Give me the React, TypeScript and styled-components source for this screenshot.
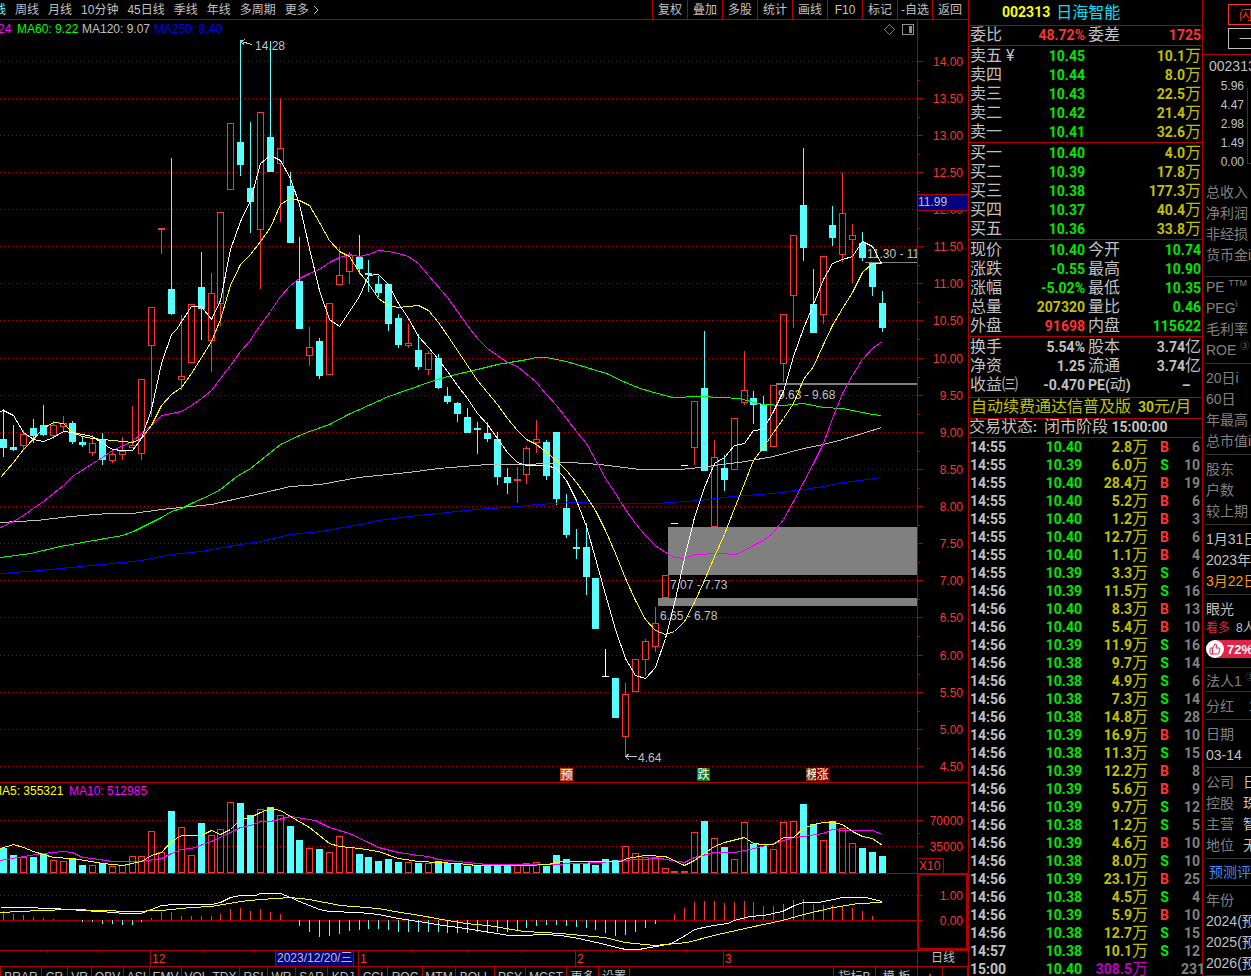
import React from 'react';
import styled, { createGlobalStyle, css } from 'styled-components';
import { ThumbsUp } from 'lucide-react';

const c = {
  line: '#b00000',
  red: '#ff3232',
  cyan: '#54ffff',
  text: '#c0c0c0',
  gray: '#808080',
  green: '#00e600',
  lime: '#00ff00',
  yellow: '#ffff00',
  olive: '#c0c000',
  magenta: '#ff00ff',
  blue: '#0000ff',
  navy: '#000080',
  name: '#00e0ff',
};

const sans = `"Liberation Sans", "Noto Sans CJK SC", sans-serif`;
const quoteFont = `Roboto, "Noto Sans CJK SC", sans-serif`;

const GlobalStyle = createGlobalStyle`
  *, *::before, *::after { box-sizing: border-box; }
  body { margin: 0; background: #000; color: ${c.text}; font: 12px/16px ${sans}; overflow: hidden; }
  button { margin: 0; padding: 0; border: 0; background: none; color: inherit; font: inherit; cursor: pointer; white-space: nowrap; }
  table { border-collapse: collapse; border-spacing: 0; }
`;

/* ---------- data ---------- */

type Kind = 'up' | 'down' | 'flatUp' | 'flatDown';
// x, high, body top, body bottom, low, kind, volume top, MACD bar end
type Bar = [number, number, number, number, number, Kind, number, number];

const U: Kind = 'up';
const D: Kind = 'down';

const bars: Bar[] = [
  [3, 409, 439, 448, 457, D, 848, 911], [13, 425, 447, 450, 451, D, 855, 914], [23, 430, 434, 446, 450, U, 857, 915],
  [33, 419, 428, 436, 443, D, 857, 917], [43, 405, 425, 435, 436, D, 854, 918], [53, 421, 425, 436, 439, U, 860, 919],
  [63, 416, 423, 427, 432, U, 861, 920], [72, 421, 423, 442, 444, D, 859, 920], [82, 436, 442, 445, 447, D, 865, 922],
  [92, 435, 443, 453, 456, U, 865, 922], [102, 433, 439, 460, 465, D, 863, 924], [112, 452, 454, 461, 463, U, 866, 924],
  [122, 437, 451, 455, 460, U, 865, 925], [132, 406, 445, 448, 448, U, 856, 925], [141, 379, 379, 454, 460, U, 856, 922],
  [151, 307, 307, 346, 417, U, 831, 918], [161, 228, 228, 230, 254, U, 852, 912], [171, 158, 289, 314, 315, D, 811, 912],
  [181, 315, 376, 380, 390, U, 827, 916], [191, 304, 304, 363, 363, U, 855, 916], [201, 252, 287, 309, 340, D, 823, 916],
  [211, 273, 293, 341, 372, U, 835, 916], [220, 212, 212, 304, 326, U, 829, 914], [230, 123, 123, 190, 190, U, 802, 909],
  [240, 40, 142, 165, 176, D, 803, 908], [250, 122, 188, 202, 233, D, 815, 911], [260, 112, 112, 230, 289, U, 809, 909],
  [270, 41, 137, 172, 172, D, 807, 912], [280, 99, 148, 164, 222, U, 815, 914], [290, 172, 186, 243, 243, D, 826, 920],
  [299, 237, 281, 329, 329, D, 840, 926], [309, 327, 347, 356, 366, U, 848, 932], [319, 338, 341, 376, 379, D, 849, 937],
  [329, 303, 303, 375, 375, U, 852, 936], [339, 247, 275, 285, 285, U, 836, 934], [349, 252, 255, 272, 284, U, 847, 931],
  [359, 235, 257, 269, 274, D, 854, 930], [368, 260, 273, 275, 292, D, 857, 929], [378, 276, 284, 293, 297, D, 861, 929],
  [388, 284, 284, 324, 331, D, 859, 930], [398, 314, 318, 345, 348, D, 862, 932], [408, 324, 343, 346, 348, U, 862, 932],
  [418, 334, 350, 367, 370, D, 863, 932], [428, 351, 353, 370, 375, U, 863, 932], [438, 354, 358, 388, 389, D, 861, 932],
  [447, 387, 396, 402, 404, D, 863, 933], [457, 402, 403, 414, 422, D, 864, 933], [467, 408, 417, 433, 433, D, 866, 933],
  [477, 422, 428, 430, 454, D, 865, 932], [487, 422, 433, 439, 442, D, 865, 932], [497, 432, 439, 477, 485, D, 866, 932],
  [507, 468, 477, 483, 494, D, 866, 932], [517, 467, 479, 481, 503, U, 865, 930], [526, 446, 448, 475, 484, U, 863, 928],
  [536, 420, 439, 443, 453, U, 862, 926], [546, 440, 442, 476, 480, D, 866, 925], [556, 432, 432, 499, 505, D, 855, 925],
  [566, 494, 508, 535, 538, D, 859, 926], [576, 529, 547, 549, 559, D, 864, 927], [586, 523, 547, 577, 595, D, 863, 928],
  [595, 578, 578, 629, 629, D, 865, 930], [605, 649, 676, 677, 677, 'flatDown', 859, 933], [615, 678, 678, 718, 718, D, 860, 936],
  [625, 683, 694, 737, 757, U, 846, 935], [635, 659, 659, 692, 692, U, 853, 932], [645, 639, 641, 660, 676, U, 857, 928],
  [655, 607, 623, 647, 652, U, 857, 924], [665, 575, 575, 598, 598, U, 868, 920], [674, 523, 523, 524, 524, 'flatUp', 871, 914],
  [684, 465, 465, 466, 466, 'flatUp', 871, 908], [694, 401, 401, 448, 465, U, 832, 902], [704, 331, 388, 471, 471, D, 821, 901],
  [714, 440, 457, 527, 527, U, 838, 901], [724, 455, 468, 480, 491, D, 847, 903], [734, 418, 418, 470, 470, U, 859, 902],
  [744, 351, 390, 403, 405, U, 822, 901], [753, 391, 398, 405, 424, D, 844, 902], [763, 396, 404, 451, 451, D, 846, 906],
  [773, 385, 385, 447, 447, U, 849, 906], [783, 314, 314, 364, 382, U, 822, 904], [793, 235, 235, 296, 328, U, 821, 900],
  [803, 148, 205, 248, 261, D, 804, 899], [813, 269, 304, 333, 333, D, 824, 904], [823, 256, 256, 315, 324, U, 840, 905],
  [832, 206, 225, 238, 246, D, 821, 905], [842, 173, 213, 255, 262, U, 828, 906], [852, 224, 235, 240, 283, U, 843, 908],
  [862, 232, 243, 258, 261, D, 848, 911], [872, 263, 263, 287, 296, D, 852, 916], [882, 291, 303, 328, 332, D, 856, 920],
];

const priceLines: [string, string][] = [
  [c.blue, '0,573 40,570 80,566 122,562 141,560 171,554 200,551 240,544 260,541 290,534 320,531 360,524 378,520 408,516 447,512 487,508 507,507 536,504 576,502 600,503 656,503 700,500 732,496 773,493 803,489 823,486 842,482 860,480 881,477'],
  [c.text, '0,522 36,520 70,516 108,513 132,513 161,509 211,504 260,493 290,486 320,484 358,477 408,472 438,468 487,464 526,464 545,463 570,462 600,464 615,466 640,469 680,469 700,467 714,465 745,461 773,456 803,448 823,444 842,439 862,433 881,427'],
  [c.lime, '0,557 30,553 60,546 82,542 122,535 133,531 161,517 171,511 181,508 191,503 211,494 220,489 235,477 250,468 260,460 280,444 299,435 309,431 329,424 348,414 368,405 388,396 408,389 428,382 447,376 477,369 497,364 527,359 536,357 546,357 566,361 586,367 606,373 625,382 640,388 650,391 672,397 700,396 720,397 740,398 753,402 763,404 783,405 803,403 813,405 823,407 842,408 862,412 872,414 881,415'],
  [c.magenta, '0,527 13,521 23,515 43,501 63,485 72,476 92,463 102,457 112,450 132,441 141,433 151,425 161,415 181,411 191,405 201,398 211,390 220,378 230,365 240,351 250,340 256,330 270,311 280,296 290,285 299,278 309,273 319,269 329,262 339,257 349,254 359,256 368,254 378,250 388,251 398,253 408,256 418,263 428,275 447,297 457,311 467,325 477,338 487,348 507,362 517,366 536,382 546,394 556,405 576,431 586,443 597,463 605,478 615,493 625,509 635,523 645,535 655,545 665,552 674,557 684,558 694,554 720,553 735,554 744,550 753,545 763,540 773,532 783,519 793,501 803,482 813,463 823,443 832,418 842,393 852,375 862,359 872,348 882,341'],
  [c.yellow, '0,477 13,462 23,449 43,428 53,422 63,423 72,432 82,436 92,438 112,440 122,441 132,442 141,438 151,425 161,405 171,394 181,387 191,373 201,357 211,341 220,319 230,285 240,264 250,254 260,241 270,227 280,204 290,198 299,200 309,205 319,222 329,240 339,251 349,256 359,272 368,283 378,298 388,305 398,307 418,305 428,310 438,322 447,335 457,350 467,365 477,380 487,392 497,404 507,418 517,430 526,439 536,444 546,452 556,460 566,470 576,482 586,496 595,510 605,530 615,553 625,578 635,600 645,619 655,630 665,634 674,631 684,621 694,602 704,580 714,556 724,534 734,508 744,483 753,460 763,447 773,432 783,418 793,403 803,379 813,366 823,344 832,325 842,308 852,292 862,272 872,263 881,263'],
  ['#ffffff', '0,411 3,410 13,415 23,432 33,439 43,441 53,437 63,431 72,432 82,434 92,436 102,443 112,449 122,450 132,450 141,438 151,409 161,363 171,334 176,329 191,306 201,306 211,319 220,300 230,249 240,221 250,200 260,163 270,155 280,160 290,178 299,204 309,248 319,290 329,319 339,326 359,296 368,275 378,274 388,284 398,303 408,318 418,336 428,347 438,359 447,371 457,385 467,398 477,413 487,424 497,438 507,452 517,462 526,465 546,465 556,468 566,480 576,500 586,526 595,558 605,594 615,629 625,658 635,675 645,678 655,667 665,638 674,603 684,558 694,517 704,487 714,463 724,457 734,445 744,443 753,430 763,429 773,411 783,391 793,356 803,328 813,304 823,279 832,263 842,259 852,256 862,241 872,246 881,263'],
];

const volumeLines: [string, string][] = [
  [c.magenta, '0,860 23,856 43,853 63,851 72,852 82,857 92,858 112,861 141,861 161,858 171,853 181,849 191,848 211,841 230,832 240,827 250,825 260,821 270,821 290,816 315,820 329,827 349,833 368,842 378,847 398,852 418,855 428,856 438,859 467,862 487,864 550,864 600,862 635,859 660,858 684,862 694,857 714,852 734,852 754,848 773,843 793,837 803,836 823,833 832,829 842,830 872,830 882,834'],
  [c.yellow, '0,848 13,844 23,847 33,851 43,854 53,857 72,858 102,863 122,865 141,861 151,855 161,852 171,841 181,835 201,835 211,830 220,834 230,829 240,819 250,817 260,812 270,808 280,810 290,816 309,827 329,843 339,846 359,848 378,851 398,858 418,861 438,862 457,863 477,865 526,865 548,864 560,861 620,861 627,858 645,855 665,856 684,865 694,860 704,853 714,846 724,842 744,837 753,843 763,844 773,844 783,837 793,837 803,828 813,824 823,822 832,822 842,824 852,831 862,836 872,838 882,845'],
];

const macdLines: [string, string][] = [
  ['#ffffff', '0,907 25,907 50,908 70,909 80,910 100,911 125,913 140,913 151,909 161,905 175,904 211,904 220,902 230,897 240,895 255,895 260,893 280,893 290,897 299,901 319,909 329,911 358,912 378,914 398,918 418,921 436,924 465,928 509,935 520,935 545,934 560,935 578,938 596,942 625,949 638,949 656,946 671,943 685,935 694,929 713,925 727,923 734,920 749,916 763,915 782,911 794,905 803,902 818,902 833,899 842,897 865,897 882,901'],
  [c.yellow, '0,912 40,910 70,909 100,910 130,911 161,910 191,907 211,906 240,901 260,899 290,897 309,899 340,905 378,908 400,912 420,915 436,918 465,923 487,925 524,931 560,933 604,937 625,942 654,945 687,942 713,935 749,927 782,920 803,914 833,907 858,903 882,902'],
];

const prices = Array.from({ length: 20 }, (_, i) => ({
  label: (14 - i * 0.5).toFixed(2),
  y: Math.floor(61 + i * 37.13),
})).filter((p) => p.y < 780);

const asks = [['卖五', '10.45', '10.1'], ['卖四', '10.44', '8.0'], ['卖三', '10.43', '22.5'], ['卖二', '10.42', '21.4'], ['卖一', '10.41', '32.6']];
const bids = [['买一', '10.40', '4.0'], ['买二', '10.39', '17.8'], ['买三', '10.38', '177.3'], ['买四', '10.37', '40.4'], ['买五', '10.36', '33.8']];

const ticks = [
  '14:55 10.40 2.8 B 6', '14:55 10.39 6.0 S 10', '14:55 10.40 28.4 B 19', '14:55 10.40 5.2 B 6', '14:55 10.40 1.2 B 3',
  '14:55 10.40 12.7 B 6', '14:55 10.40 1.1 B 4', '14:55 10.39 3.3 S 6', '14:56 10.39 11.5 S 16', '14:56 10.40 8.3 B 13',
  '14:56 10.40 5.4 B 10', '14:56 10.39 11.9 S 16', '14:56 10.38 9.7 S 14', '14:56 10.38 4.9 S 6', '14:56 10.38 7.3 S 14',
  '14:56 10.38 14.8 S 28', '14:56 10.39 16.9 B 10', '14:56 10.38 11.3 S 15', '14:56 10.39 12.2 B 8', '14:56 10.39 5.6 B 9',
  '14:56 10.39 9.7 S 12', '14:56 10.38 1.2 S 5', '14:56 10.39 4.6 B 10', '14:56 10.38 8.0 S 10', '14:56 10.39 23.1 B 25',
  '14:56 10.38 4.5 S 4', '14:56 10.39 5.9 B 10', '14:56 10.38 12.7 S 15', '14:57 10.38 10.1 S 12', '15:00 10.40 308.5 - 231',
].map((t) => t.split(' '));

const indicators: [string, number][] = [
  ['BRAR', 41], ['CR', 26], ['VR', 24], ['OBV', 32], ['ASI', 26], ['EMV', 32], ['VOL-TDX', 58], ['RSI', 28], ['WR', 28], ['SAR', 32],
  ['KDJ', 31], ['CCI', 29], ['ROC', 35], ['MTM', 33], ['BOLL', 39], ['PSY', 31], ['MCST', 41], ['更多', 32], ['设置', 32],
];

/* ---------- layout ---------- */

const Terminal = styled.div`
  display: flex;
  height: 100vh;
  overflow: hidden;
  background: #000;
`;

const ChartColumn = styled.main`
  flex: 1;
  min-width: 0;
  display: flex;
  flex-direction: column;
  overflow: hidden;
`;

const Toolbar = styled.nav`
  display: flex;
  justify-content: space-between;
  flex: none;
  height: 20px;
  border-bottom: 1px solid ${c.line};
`;

const PeriodList = styled.div`
  display: flex;
  align-items: center;
  gap: 9px;
  margin-left: -6px;
`;

const PeriodButton = styled.button<{ $active?: boolean }>`
  display: flex;
  align-items: center;
  gap: 4px;
  color: ${(p) => (p.$active ? c.cyan : c.text)};
`;

const ToolList = styled.div`
  display: flex;
  padding-right: 1px;
`;

const ToolButton = styled.button`
  width: 35px;
  border-left: 1px solid ${c.line};
  text-align: center;
`;

const Pane = styled.section`
  display: flex;
  flex: none;
  border-bottom: 1px solid ${c.line};
`;

const Plot = styled.svg<{ $h: number }>`
  display: block;
  flex: 1;
  min-width: 0;
  height: ${(p) => p.$h}px;
  overflow: hidden;
  font: 12px ${sans};
  shape-rendering: crispEdges;
`;

const Axis = styled.svg<{ $h: number }>`
  display: block;
  flex: none;
  width: 51px;
  height: ${(p) => p.$h}px;
  font: 12px ${sans};
  shape-rendering: crispEdges;
`;

const PeriodCell = styled.div`
  width: 51px;
  border-left: 1px solid ${c.line};
  line-height: 15px;
  text-align: center;
`;

const IndicatorBar = styled.nav`
  display: flex;
  flex: none;
  justify-content: space-between;
  height: 20px;
`;

const TabGroup = styled.div`
  display: flex;
`;

const Tab = styled.button<{ $w?: number }>`
  border-left: 1px solid ${c.line};
  text-align: center;
  ${(p) => p.$w && css`width: ${p.$w}px;`}
  &:last-child { border-right: 1px solid ${c.line}; }
`;

/* ---------- quote panel ---------- */

const QuotePanel = styled.aside`
  flex: none;
  width: 235px;
  border-left: 1px solid ${c.line};
  border-right: 1px solid ${c.line};
  font: bold 14px/19px ${quoteFont};
`;

const QuoteTitle = styled.h1`
  display: flex;
  align-items: center;
  gap: 6px;
  height: 26px;
  margin: 0;
  padding-left: 33px;
  border-bottom: 1px solid ${c.line};
  font: inherit;
  color: ${c.yellow};
`;

const Han = styled.span<{ $color?: string }>`
  font-size: 16px;
  font-weight: 400;
  line-height: 0;
  color: ${(p) => p.$color || 'inherit'};
`;

const Block = styled.div<{ $top?: number; $end?: number }>`
  padding: ${(p) => p.$top ?? 1}px 1px ${(p) => p.$end || 0}px 1px;
  border-bottom: 1px solid ${c.line};
`;

const Pair = styled.dl`
  display: grid;
  grid-template-columns: 115px 1fr;
  gap: 3px;
  height: 19px;
  margin: 0;
`;

const Item = styled.div`
  display: flex;
  justify-content: space-between;
  dt { font-size: 14px; white-space: nowrap; }
`;

const Value = styled.dd<{ $color: string }>`
  margin: 0;
  color: ${(p) => p.$color};
  white-space: nowrap;
`;

const QuoteTable = styled.table<{ $row: number }>`
  width: 100%;
  table-layout: fixed;
  tr { height: ${(p) => p.$row}px; }
  td, th { padding: 0; font: inherit; line-height: ${(p) => p.$row}px; white-space: nowrap; }
`;

const Cell = styled.td<{ $color: string; $align?: string }>`
  color: ${(p) => p.$color};
  text-align: ${(p) => p.$align || 'right'};
`;

const HeadCell = styled.th`
  && { text-align: left; }
`;

const NoticeLink = styled.a`
  display: block;
  height: 21px;
  padding-left: 2px;
  border-bottom: 1px solid ${c.line};
  color: ${c.olive};
  text-decoration: none;
  white-space: pre;
`;

const Status = styled.div`
  height: 19px;
  border-bottom: 1px solid ${c.line};
  line-height: 17px;
  white-space: pre;
`;

const TickArea = styled.div`
  padding: 0 2px 0 1px;
`;

/* ---------- side panel ---------- */

const SidePanel = styled.aside`
  flex: none;
  width: 48px;
  overflow: hidden;
  font: 14px/21px ${sans};
  white-space: nowrap;
`;

const SideButtons = styled.div`
  display: flex;
  flex-direction: column;
  gap: 3px;
  height: 55px;
  padding: 4px 0 0 25px;
  border-bottom: 1px solid ${c.line};
`;

const SideButton = styled.button<{ $color: string }>`
  width: 54px;
  height: 21px;
  flex: none;
  padding-left: 10px;
  border: 1px solid ${(p) => p.$color};
  color: ${(p) => p.$color};
  font-size: 13px;
  line-height: 19px;
  text-align: left;
`;

const SideCode = styled.div`
  padding-left: 6px;
  line-height: 22px;
`;

const MiniChart = styled.div`
  display: flex;
  gap: 3px;
  height: 105px;
`;

const MiniScale = styled.div`
  flex: none;
  width: 41px;
  font-size: 12px;
  line-height: 19px;
  text-align: right;
`;

const MiniPlot = styled.div`
  flex: none;
  width: 60px;
  height: 76px;
  margin-top: 11px;
  border-left: 1px solid #333;
  border-bottom: 1px solid #333;
`;

const SideSection = styled.section<{ $top?: number; $bottom?: number; $color?: string }>`
  margin-left: 3px;
  padding: ${(p) => p.$top ?? 4}px 0 ${(p) => p.$bottom ?? 2}px;
  border-bottom: 1px solid #333;
  color: ${(p) => p.$color || c.gray};
`;

const SideRow = styled.div<{ $color?: string; $h?: number }>`
  height: ${(p) => p.$h || 21}px;
  line-height: ${(p) => p.$h || 21}px;
  color: ${(p) => p.$color || 'inherit'};
  sup { font-size: 9px; line-height: 0; }
`;

const SideText = styled.span<{ $color: string; $gap?: number }>`
  margin-left: ${(p) => p.$gap || 0}px;
  color: ${(p) => p.$color};
`;

const Small = styled.div`
  font-size: 12px;
  line-height: 16px;
`;

const Pill = styled.div`
  display: flex;
  align-items: center;
  gap: 3px;
  width: 90px;
  height: 18px;
  margin-top: 4px;
  border-radius: 9px;
  background: #e02448;
  color: #fff;
  font-size: 13px;
  font-weight: bold;
`;

const Thumb = styled.span`
  display: flex;
  align-items: center;
  justify-content: center;
  width: 18px;
  height: 18px;
  border-radius: 9px;
  background: #fff;
  color: #e02448;
`;

const SideLink = styled.a`
  display: block;
  padding-left: 3px;
  color: #3d8bff;
  text-decoration: none;
`;

/* ---------- chart pieces ---------- */

const GridLine = ({ y, dash = '1 3' }: { y: number; dash?: string }) => (
  <line x1="0" x2="100%" y1={y + 0.5} y2={y + 0.5} stroke={c.line} strokeDasharray={dash} />
);

const Lines = ({ items }: { items: [string, string][] }) => (
  <g fill="none" transform="translate(0.5 0.5)">
    {items.map(([color, points]) => (
      <polyline key={color} points={points} stroke={color} />
    ))}
  </g>
);

const Candle = ({ bar: [x, high, top, bottom, low, kind] }: { bar: Bar }) => {
  const up = kind === 'up';
  const color = up ? c.red : kind === 'down' ? c.cyan : '#ffffff';
  return (
    <g>
      {top > high && <rect x={x} y={high} width="1" height={top - high} fill={color} />}
      {low > bottom && <rect x={x} y={bottom} width="1" height={low - bottom} fill={color} />}
      {up && bottom - top > 2 ? (
        <rect x={x - 2.5} y={top + 0.5} width="6" height={bottom - top - 1} fill="none" stroke={color} />
      ) : (
        <rect x={x - 3} y={top} width="7" height={bottom - top} fill={color} />
      )}
    </g>
  );
};

const VolumeBar = ({ bar }: { bar: Bar }) => {
  const [x, , , , , kind, top] = bar;
  return kind === 'up' || kind === 'flatUp' ? (
    <rect x={x - 2.5} y={top + 0.5} width="6" height={872 - top} fill="none" stroke={c.red} />
  ) : (
    <rect x={x - 3} y={top} width="7" height={873 - top} fill={c.cyan} />
  );
};

const MacdBar = ({ bar }: { bar: Bar }) => {
  const x = bar[0];
  const end = bar[7];
  return <rect x={x} y={Math.min(end, 920)} width="1" height={Math.abs(end - 920)} fill={end < 920 ? c.red : c.cyan} />;
};

const Mark = ({ x, w = 13, fill, children }: { x: number; w?: number; fill: string; children: string }) => (
  <g>
    <rect x={x} y="768" width={w} height="13" rx="1" fill={fill} />
    <text x={x + w / 2} y="779" fill="#fff" textAnchor="middle">{children}</text>
  </g>
);

const AxisLabel = ({ y, children }: { y: number; children: string }) => (
  <g>
    <rect x="0" y={y} width="6" height="1" fill={c.line} />
    <text x="46" y={y + 5} fill={c.red} textAnchor="end">{children}</text>
  </g>
);

const PricePane = () => (
  <Pane>
    <Plot $h={762}>
      <g transform="translate(0 -20)">
        {prices.map((p) => <GridLine key={p.y} y={p.y} />)}
        <g fill="#808080">
          <rect x="668" y="527" width="100%" height="48" />
          <rect x="658" y="598" width="100%" height="8" />
          <rect x="776" y="383" width="100%" height="2" />
          <rect x="865" y="262" width="100%" height="1" />
        </g>
        {bars.map((b) => <Candle key={b[0]} bar={b} />)}
        <g fill={c.text}>
          <text x="670" y="589">7.07 - 7.73</text>
          <text x="660" y="620">6.65 - 6.78</text>
          <text x="778" y="399">9.63 - 9.68</text>
          <text x="867" y="258">11.30 - 11</text>
          <text x="638" y="762">4.64</text>
          <text x="255" y="50">14.28</text>
        </g>
        <Lines items={priceLines} />
        <g fill="none" stroke={c.text}>
          <path d="M625.5 756.5H637M629.5 753.5L625.5 756.5L629.5 760.5" />
          <path d="M241 41.5L252 44.5M245 39.5L240.5 41.5L244 44.5" />
        </g>
        <Mark x={560} fill="#c04808">预</Mark>
        <Mark x={697} fill="#008000">跌</Mark>
        <Mark x={806} fill="#804000">榜</Mark>
        <Mark x={816} fill="#800000">涨</Mark>
        <text x="-2" y="33" fill={c.magenta}>24</text>
        <text x="17" y="33" fill={c.lime}>MA60: 9.22</text>
        <text x="82" y="33" fill={c.text}>MA120: 9.07</text>
        <text x="154" y="33" fill={c.blue}>MA250: 8.40</text>
        <path d="M889.5 24.5L894.5 29.5L889.5 34.5L884.5 29.5Z" fill="none" stroke={c.gray} />
        <rect x="902.5" y="24.5" width="11" height="10" rx="1" fill="none" stroke="#909090" />
        <rect x="909" y="26" width="3" height="7" fill="#909090" />
      </g>
    </Plot>
    <Axis $h={762}>
      <g transform="translate(0 -20)">
        <rect x="0" y="20" width="1" height="762" fill={c.line} />
        {prices.map((p) => (
          <g key={p.y}>
            <AxisLabel y={p.y}>{p.label}</AxisLabel>
            {p.y < 760 && <rect x="1" y={p.y + 19} width="2" height="1" fill={c.line} />}
          </g>
        ))}
        <rect x="0.5" y="194.5" width="52" height="16" fill={c.navy} stroke={c.line} />
        <text x="1" y="206" fill={c.text}>11.99</text>
      </g>
    </Axis>
  </Pane>
);

const VolumePane = () => (
  <Pane>
    <Plot $h={90}>
      <g transform="translate(0 -783)">
        <GridLine y={820} />
        <GridLine y={846} />
        {bars.map((b) => <VolumeBar key={b[0]} bar={b} />)}
        <Lines items={volumeLines} />
        <text x="-8" y="795" fill={c.yellow}>MA5: 355321</text>
        <text x="69" y="795" fill={c.magenta}>MA10: 512985</text>
      </g>
    </Plot>
    <Axis $h={90}>
      <g transform="translate(0 -783)">
        <rect x="0" y="783" width="1" height="90" fill={c.line} />
        <AxisLabel y={820}>70000</AxisLabel>
        <AxisLabel y={846}>35000</AxisLabel>
        <rect x="1" y="833" width="2" height="1" fill={c.line} />
        <rect x="0.5" y="858.5" width="26" height="16" fill="none" stroke={c.line} />
        <text x="2" y="870" fill={c.red}>X10</text>
      </g>
    </Axis>
  </Pane>
);

const MacdPane = () => (
  <Pane>
    <Plot $h={76}>
      <g transform="translate(0 -874)">
        <GridLine y={895} />
        <GridLine y={920} dash="1 1" />
        {bars.map((b) => <MacdBar key={b[0]} bar={b} />)}
        <Lines items={macdLines} />
      </g>
    </Plot>
    <Axis $h={76}>
      <g transform="translate(0 -874)">
        <rect x="1" y="874" width="49" height="75" fill="none" stroke={c.line} strokeWidth="2" />
        <AxisLabel y={895}>1.00</AxisLabel>
        <AxisLabel y={920}>0.00</AxisLabel>
      </g>
    </Axis>
  </Pane>
);

const DatePane = () => (
  <Pane>
    <Plot $h={15}>
      {[47, 98, 202, 254, 412, 467, 521, 612, 649, 686].map((x) => (
        <rect key={x} x={x} y="0" width="1" height="2" fill={c.line} />
      ))}
      {([[150, '12'], [358, '1'], [575, '2'], [723, '3']] as [number, string][]).map(([x, label]) => (
        <g key={x}>
          <rect x={x} y="0" width="1" height="15" fill={c.line} />
          <text x={x + 2} y="12" fill={c.red}>{label}</text>
        </g>
      ))}
      <rect x="275.5" y="-0.5" width="78" height="16" fill={c.navy} stroke={c.line} />
      <text x="277" y="11" fill={c.text}>2023/12/20/三</text>
    </Plot>
    <PeriodCell>日线</PeriodCell>
  </Pane>
);

/* ---------- quote pieces ---------- */

interface HalfProps {
  label: React.ReactNode;
  value: React.ReactNode;
  color: string;
}

const Half = ({ label, value, color }: HalfProps) => (
  <Item>
    <dt><Han>{label}</Han></dt>
    <Value $color={color}>{value}</Value>
  </Item>
);

const Row = ({ left, right }: { left: [React.ReactNode, React.ReactNode, string]; right: [React.ReactNode, React.ReactNode, string] }) => (
  <Pair>
    <Half label={left[0]} value={left[1]} color={left[2]} />
    <Half label={right[0]} value={right[1]} color={right[2]} />
  </Pair>
);

const Book = ({ rows, marked }: { rows: string[][]; marked?: boolean }) => (
  <Block>
    <QuoteTable $row={19}>
      <colgroup>
        <col width="55" />
        <col width="60" />
        <col />
      </colgroup>
      <tbody>
        {rows.map(([label, price, volume], i) => (
          <tr key={label}>
            <HeadCell scope="row"><Han>{label}{marked && i === 0 ? ' ¥' : ''}</Han></HeadCell>
            <Cell $color={c.green}>{price}</Cell>
            <Cell $color={c.olive}>{volume}<Han>万</Han></Cell>
          </tr>
        ))}
      </tbody>
    </QuoteTable>
  </Block>
);

const Quote = () => (
  <QuotePanel>
    <QuoteTitle>002313<Han $color={c.name}>日海智能</Han></QuoteTitle>
    <Block $top={0}>
      <Row left={['委比', '48.72%', c.red]} right={['委差', '1725', c.red]} />
    </Block>
    <Book rows={asks} marked />
    <Book rows={bids} />
    <Block>
      <Row left={['现价', '10.40', c.green]} right={['今开', '10.74', c.green]} />
      <Row left={['涨跌', '-0.55', c.green]} right={['最高', '10.90', c.green]} />
      <Row left={['涨幅', '-5.02%', c.green]} right={['最低', '10.35', c.green]} />
      <Row left={['总量', '207320', c.olive]} right={['量比', '0.46', c.green]} />
      <Row left={['外盘', '91698', c.red]} right={['内盘', '115622', c.green]} />
    </Block>
    <Block $end={2}>
      <Row left={['换手', '5.54%', c.text]} right={['股本', <>3.74<Han>亿</Han></>, c.text]} />
      <Row left={['净资', '1.25', c.text]} right={['流通', <>3.74<Han>亿</Han></>, c.text]} />
      <Pair>
        <Half label="收益㈢" value="-0.470" color={c.text} />
        <Item>
          <dt>PE(<Han>动</Han>)</dt>
          <Value $color={c.text}>–&nbsp;&nbsp;&nbsp;</Value>
        </Item>
      </Pair>
    </Block>
    <NoticeLink href="#renew"><Han>自动续费通达信普及版</Han>{'  '}30<Han>元</Han>/<Han>月</Han></NoticeLink>
    <Status><Han>交易状态</Han>{':  '}<Han>闭市阶段</Han>{' '}15:00:00</Status>
    <TickArea>
      <QuoteTable $row={18}>
        <colgroup>
          <col width="50" />
          <col width="62" />
          <col width="66" />
          <col width="33" />
          <col />
        </colgroup>
        <tbody>
          {ticks.map(([time, price, volume, side, count], i) => (
            <tr key={i}>
              <Cell $color={c.text} $align="left">{time}</Cell>
              <Cell $color={c.green}>{price}</Cell>
              <Cell $color={side === '-' ? '#c000c0' : c.olive}>{volume}<Han>万</Han></Cell>
              <Cell $color={side === 'B' ? c.red : c.green} $align="center">{side === '-' ? '' : side}</Cell>
              <Cell $color={c.gray}>{count}</Cell>
            </tr>
          ))}
        </tbody>
      </QuoteTable>
    </TickArea>
  </QuotePanel>
);

const Side = () => (
  <SidePanel>
    <SideButtons>
      <SideButton $color={c.red}>闪</SideButton>
      <SideButton $color={c.text}>一</SideButton>
    </SideButtons>
    <SideCode>002313</SideCode>
    <MiniChart>
      <MiniScale>
        {['5.96', '4.47', '2.98', '1.49', '0.00'].map((v) => <div key={v}>{v}</div>)}
      </MiniScale>
      <MiniPlot />
    </MiniChart>
    <SideSection $top={0} $bottom={10}>
      <SideRow>总收入</SideRow>
      <SideRow>净利润</SideRow>
      <SideRow>非经损</SideRow>
      <SideRow>货币金<SideText $color="#a08060">i</SideText></SideRow>
    </SideSection>
    <SideSection $top={0}>
      <SideRow>PE <sup>TTM</sup></SideRow>
      <SideRow>PEG<sup>i</sup></SideRow>
      <SideRow>毛利率</SideRow>
      <SideRow>ROE <sup>③</sup></SideRow>
    </SideSection>
    <SideSection>
      <SideRow>20日i</SideRow>
      <SideRow>60日</SideRow>
      <SideRow>年最高</SideRow>
      <SideRow>总市值<SideText $color="#a08060">i</SideText></SideRow>
    </SideSection>
    <SideSection>
      <SideRow>股东</SideRow>
      <SideRow>户数</SideRow>
      <SideRow>较上期</SideRow>
    </SideSection>
    <SideSection $color={c.text}>
      <SideRow>1月31日</SideRow>
      <SideRow>2023年</SideRow>
      <SideRow $color="#ff9900">3月22日</SideRow>
    </SideSection>
    <SideSection $bottom={9} $color={c.text}>
      <SideRow>眼光</SideRow>
      <Small><SideText $color="#e02448">看多</SideText><SideText $color={c.text} $gap={6}>8人</SideText></Small>
      <Pill><Thumb><ThumbsUp size={12} strokeWidth={2} /></Thumb>72%</Pill>
    </SideSection>
    <SideSection $bottom={0}>
      <SideRow $h={19}>法人1 <sup>③</sup></SideRow>
    </SideSection>
    <SideSection>
      <SideRow>分红<SideText $color={c.text} $gap={15}>1</SideText></SideRow>
    </SideSection>
    <SideSection $bottom={1}>
      <SideRow>日期</SideRow>
      <SideRow $color={c.text}>03-14</SideRow>
    </SideSection>
    <SideSection>
      {[['公司', '日'], ['控股', '珠'], ['主营', '智'], ['地位', '无']].map(([k, v]) => (
        <SideRow key={k}>{k}<SideText $color={c.text} $gap={9}>{v}</SideText></SideRow>
      ))}
    </SideSection>
    <SideSection $top={3}>
      <SideLink href="#forecast">预测评</SideLink>
    </SideSection>
    <SideSection $bottom={1}>
      <SideRow>年份</SideRow>
      <SideRow $color={c.text}>2024(预</SideRow>
      <SideRow $color={c.text}>2025(预</SideRow>
      <SideRow $color={c.text}>2026(预</SideRow>
    </SideSection>
  </SidePanel>
);

export default function App() {
  return (
    <>
      <GlobalStyle />
      <Terminal>
        <ChartColumn>
          <Toolbar>
            <PeriodList>
              <PeriodButton $active>线</PeriodButton>
              {['周线', '月线', '10分钟', '45日线', '季线', '年线', '多周期'].map((p) => (
                <PeriodButton key={p}>{p}</PeriodButton>
              ))}
              <PeriodButton>
                更多
                <svg width="6" height="10" fill="none" stroke="currentColor">
                  <path d="M1 1L5 5L1 9" />
                </svg>
              </PeriodButton>
            </PeriodList>
            <ToolList>
              {['复权', '叠加', '多股', '统计', '画线', 'F10', '标记', '-自选', '返回'].map((t) => (
                <ToolButton key={t}>{t}</ToolButton>
              ))}
            </ToolList>
          </Toolbar>
          <PricePane />
          <VolumePane />
          <MacdPane />
          <DatePane />
          <IndicatorBar>
            <TabGroup>
              {indicators.map(([name, width]) => (
                <Tab key={name} $w={width}>{name}</Tab>
              ))}
            </TabGroup>
            <TabGroup>
              <Tab $w={42}>指标B</Tab>
              <Tab $w={42}>模 板</Tab>
              <Tab $w={25}>+</Tab>
              <Tab $w={26}>-</Tab>
            </TabGroup>
          </IndicatorBar>
        </ChartColumn>
        <Quote />
        <Side />
      </Terminal>
    </>
  );
}
